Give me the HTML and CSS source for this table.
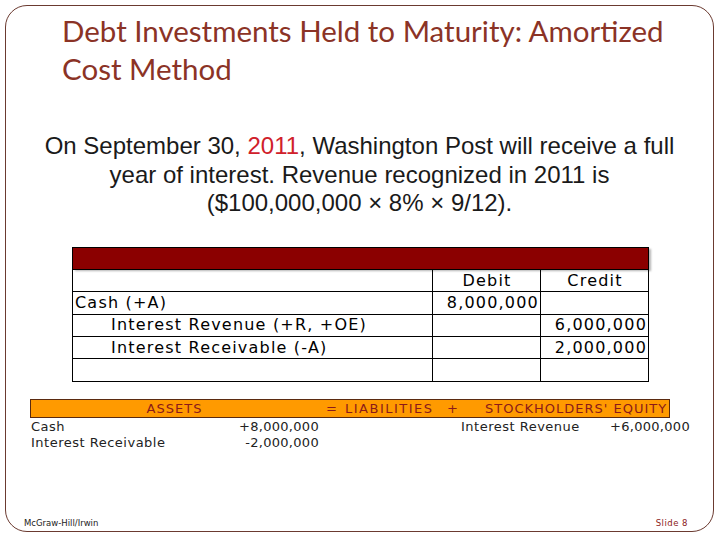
FILE: index.html
```html
<!DOCTYPE html>
<html>
<head>
<meta charset="utf-8">
<link rel="stylesheet" href="styles.css">
</head>
<body>
<div class="slide">
  <h1 class="title">Debt Investments Held to Maturity: Amortized<br>Cost Method</h1>
  <p class="lead">On September 30, <span class="red">2011</span>, Washington Post will receive a full<br>year of interest. Revenue recognized in 2011 is<br>($100,000,000 × 8% × 9/12).</p>
  <table class="journal">
    <colgroup><col class="c1"><col class="c2"><col class="c2"></colgroup>
    <tr class="band"><td colspan="3"></td></tr>
    <tr><td></td><td class="c">Debit</td><td class="c">Credit</td></tr>
    <tr><td>Cash (+A)</td><td class="r">8,000,000</td><td></td></tr>
    <tr><td class="ind">Interest Revenue (+R, +OE)</td><td></td><td class="r">6,000,000</td></tr>
    <tr><td class="ind">Interest Receivable (-A)</td><td></td><td class="r">2,000,000</td></tr>
    <tr><td></td><td></td><td></td></tr>
  </table>
  <div class="equation">
    <div class="bar">
      <span class="assets">ASSETS</span>
      <span class="eqsign">=</span>
      <span class="liab">LIABILITIES</span>
      <span class="plus">+</span>
      <span class="se">STOCKHOLDERS' EQUITY</span>
    </div>
    <div class="lines">
      <span>Cash</span><span class="amt">+8,000,000</span><span></span><span>Interest Revenue</span><span class="amt">+6,000,000</span>
      <span>Interest Receivable</span><span class="amt">-2,000,000</span><span></span><span></span><span></span>
    </div>
  </div>
  <div class="footer">
    <span class="pub">McGraw-Hill/Irwin</span>
    <span class="num">Slide 8</span>
  </div>
</div>
</body>
</html>
```
FILE: styles.css
```css
html, body {
  margin: 0;
  padding: 0;
  background: #fff;
}
.slide {
  margin: 5px;
  width: 707px;
  height: 525px;
  border: 1px solid #6b3a30;
  border-radius: 22px;
  display: flex;
  flex-direction: column;
}
.title {
  margin: 6px 0 0 56px;
  font-family: Lato, "Open Sans", sans-serif;
  font-weight: normal;
  font-size: 29.5px;
  line-height: 38px;
  color: #8b3326;
}
.lead {
  margin: 44px 0 0 0;
  text-align: center;
  font-family: "Liberation Sans", Arial, sans-serif;
  font-size: 24px;
  line-height: 28.5px;
  color: #1a1a1a;
  white-space: nowrap;
}
.red { color: #d0202a; }
.journal {
  margin: 29px 0 0 66px;
  width: 577px;
  table-layout: fixed;
  border-collapse: collapse;
  font-family: "DejaVu Sans", Verdana, sans-serif;
  font-size: 16px;
  letter-spacing: 1.2px;
  color: #000;
}
.c1 { width: 360px; }
.c2 { width: 108px; }
.journal td {
  border: 1.5px solid #000;
  height: 21.4px;
  padding: 0 1px 0 2px;
  line-height: 20px;
  white-space: nowrap;
  overflow: visible;
}
.journal tr:not(.band) td { border-top-width: 1px; border-bottom-width: 1px; }
.band td {
  background: #8b0000;
  box-shadow: 2px 2px 2px rgba(0,0,0,0.3);
}
.c { text-align: center; }
.r { text-align: right; }
.ind { padding-left: 38px !important; }
.equation {
  margin: 17px 0 0 24px;
  font-family: "DejaVu Sans", Verdana, sans-serif;
  font-size: 13px;
  color: #222;
}
.bar {
  width: 638px;
  height: 17px;
  background: #ff9a00;
  border: 1px solid #5a2a10;
  display: flex;
  align-items: center;
  color: #8b1a1a;
  line-height: 17px;
  letter-spacing: 1px;
  white-space: nowrap;
}
.assets { width: 287px; text-align: center; }
.eqsign { width: 19px; padding-left: 8px; }
.liab { width: 102px; letter-spacing: 1.5px; }
.plus { width: 38px; }
.lines {
  display: grid;
  grid-template-columns: 160px 128px 142px 140px 89px;
  line-height: 16px;
  margin-top: 1px;
  margin-left: 1px;
  letter-spacing: 0.5px;
  white-space: nowrap;
}
.amt { text-align: right; letter-spacing: 0.3px; }
.footer {
  margin-top: auto;
  display: flex;
  justify-content: space-between;
  padding: 0 25px 3px 18px;
  font-family: "DejaVu Sans", Verdana, sans-serif;
  font-size: 8.5px;
  line-height: 10px;
}
.pub { color: #222; }
.num { color: #8b2020; letter-spacing: 0.5px; }
```
